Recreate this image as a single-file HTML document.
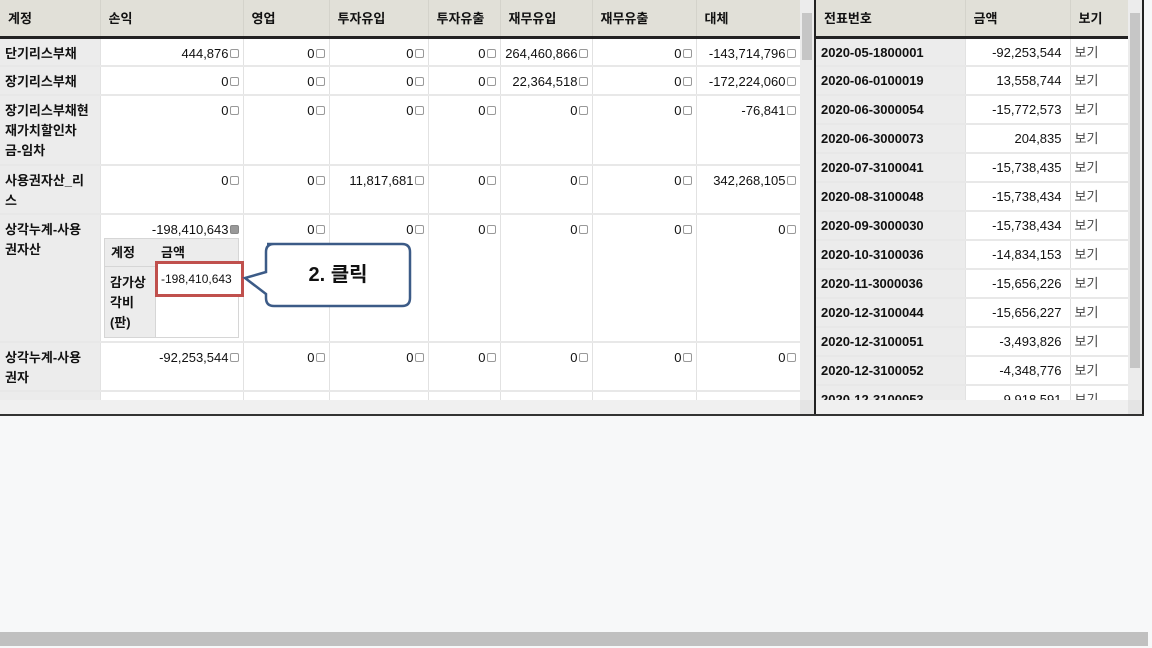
<!DOCTYPE html>
<html><head><meta charset="utf-8"><style>
*{margin:0;padding:0;box-sizing:border-box}
body{width:1152px;height:648px;overflow:hidden;background:#f7f8f9;font-family:"Liberation Sans","Noto Sans CJK KR",sans-serif;font-size:13px;color:#111;position:relative}
.wrap{position:absolute;left:0;top:0;width:1144px;height:416px;background:#fff;border-bottom:2px solid #333;overflow:hidden}
table{border-collapse:collapse;table-layout:fixed;position:absolute;top:0}
th{background:#e1e0d8;height:37px;text-align:left;font-weight:bold;padding:0 8px;border-right:1px solid #d4d3cb;border-bottom:3px solid #222;font-size:13px}
td{border-right:1px solid #e2e2e2;border-bottom:2px solid #e8e8e8;vertical-align:top;padding:6px 4px 0 4px;text-align:right;line-height:18px}
td.l{background:#ececec;text-align:left;font-weight:bold;padding-left:5px;line-height:20px;padding-top:5px}
.cb{display:inline-block;width:9px;height:9px;border:1px solid #999;border-radius:2px;margin-left:1px;vertical-align:0;background:#fff}
.cbk{background:#999;border-color:#888}
.vs{position:absolute;width:14px;background:#ececec}
.hs{position:absolute;height:14px;background:#f0f0f0}
.rt td{height:29px;padding-top:5px}
.rt td.id{background:#ececec;text-align:left;font-weight:bold;padding-left:5px}
.rt td.v{text-align:left;color:#444;padding-left:4px}
.rt td.n{padding-right:8px}
</style></head><body>
<div class="wrap">
<table style="left:0;width:800px">
<colgroup><col style="width:100px"><col style="width:143px"><col style="width:86px"><col style="width:99px"><col style="width:72px"><col style="width:92px"><col style="width:104px"><col style="width:104px"></colgroup>
<tr><th>계정</th><th>손익</th><th>영업</th><th>투자유입</th><th>투자유출</th><th>재무유입</th><th>재무유출</th><th>대체</th></tr>
<tr style="height:29px"><td class="l">단기리스부채</td><td>444,876<span class="cb"></span></td><td>0<span class="cb"></span></td><td>0<span class="cb"></span></td><td>0<span class="cb"></span></td><td>264,460,866<span class="cb"></span></td><td>0<span class="cb"></span></td><td>-143,714,796<span class="cb"></span></td></tr>
<tr style="height:29px"><td class="l">장기리스부채</td><td>0<span class="cb"></span></td><td>0<span class="cb"></span></td><td>0<span class="cb"></span></td><td>0<span class="cb"></span></td><td>22,364,518<span class="cb"></span></td><td>0<span class="cb"></span></td><td>-172,224,060<span class="cb"></span></td></tr>
<tr style="height:70px"><td class="l">장기리스부채현<br>재가치할인차<br>금-임차</td><td>0<span class="cb"></span></td><td>0<span class="cb"></span></td><td>0<span class="cb"></span></td><td>0<span class="cb"></span></td><td>0<span class="cb"></span></td><td>0<span class="cb"></span></td><td>-76,841<span class="cb"></span></td></tr>
<tr style="height:49px"><td class="l">사용권자산_리<br>스</td><td>0<span class="cb"></span></td><td>0<span class="cb"></span></td><td>11,817,681<span class="cb"></span></td><td>0<span class="cb"></span></td><td>0<span class="cb"></span></td><td>0<span class="cb"></span></td><td>342,268,105<span class="cb"></span></td></tr>
<tr style="height:128px"><td class="l">상각누계-사용<br>권자산</td><td>-198,410,643<span class="cb cbk"></span></td><td>0<span class="cb"></span></td><td>0<span class="cb"></span></td><td>0<span class="cb"></span></td><td>0<span class="cb"></span></td><td>0<span class="cb"></span></td><td>0<span class="cb"></span></td></tr>
<tr style="height:49px"><td class="l">상각누계-사용<br>권자</td><td>-92,253,544<span class="cb"></span></td><td>0<span class="cb"></span></td><td>0<span class="cb"></span></td><td>0<span class="cb"></span></td><td>0<span class="cb"></span></td><td>0<span class="cb"></span></td><td>0<span class="cb"></span></td></tr>
<tr style="height:40px"><td class="l"></td><td></td><td></td><td></td><td></td><td></td><td></td><td></td></tr>
</table>
<div style="position:absolute;left:104px;top:238px;width:135px;height:100px;border:1px solid #d6d6d6;background:#fff">
<div style="position:absolute;left:0;top:0;width:51px;height:98px;background:#ececec;border-right:1px solid #d6d6d6"></div>
<div style="position:absolute;left:0;top:0;width:133px;height:28px;background:#ececec;border-bottom:1px solid #d6d6d6"></div>
<div style="position:absolute;left:6px;top:3px;font-weight:bold">계정</div>
<div style="position:absolute;left:56px;top:3px;font-weight:bold">금액</div>
<div style="position:absolute;left:5px;top:34px;font-weight:bold;line-height:20px;width:40px">감가상<br>각비<br>(판)</div>
<div style="position:absolute;left:50px;top:22px;width:89px;height:36px;border:3px solid #c0504d;padding:8px 0 0 3px;font-size:12px;white-space:nowrap;background:#fff">-198,410,643</div>
</div>
<svg style="position:absolute;left:240px;top:240px" width="175" height="70">
<path d="M27 4 H162 Q170 4 170 12 V58 Q170 66 162 66 H34 Q26 66 26 58 V54 L5 38 L26 32 V12 Q26 4 34 4 Z" fill="#fff" stroke="#3c5b87" stroke-width="2.5"/>
<text x="98" y="41" text-anchor="middle" font-family="Liberation Sans,Noto Sans CJK KR,sans-serif" font-size="20" font-weight="bold" fill="#111">2. 클릭</text>
</svg>
<div class="vs" style="left:800px;top:0;height:400px"><div style="position:absolute;left:2px;top:13px;width:10px;height:47px;background:#c6c6c6"></div></div>
<div class="hs" style="left:0;top:400px;width:800px"></div>
<div style="position:absolute;left:800px;top:400px;width:14px;height:14px;background:#e4e4e4"></div>
<div style="position:absolute;left:814px;top:0;width:2px;height:416px;background:#222"></div>
<table class="rt" style="left:816px;width:312px">
<colgroup><col style="width:149px"><col style="width:105px"><col style="width:58px"></colgroup>
<tr><th>전표번호</th><th>금액</th><th>보기</th></tr>
<tr><td class="id">2020-05-1800001</td><td class="n">-92,253,544</td><td class="v">보기</td></tr>
<tr><td class="id">2020-06-0100019</td><td class="n">13,558,744</td><td class="v">보기</td></tr>
<tr><td class="id">2020-06-3000054</td><td class="n">-15,772,573</td><td class="v">보기</td></tr>
<tr><td class="id">2020-06-3000073</td><td class="n">204,835</td><td class="v">보기</td></tr>
<tr><td class="id">2020-07-3100041</td><td class="n">-15,738,435</td><td class="v">보기</td></tr>
<tr><td class="id">2020-08-3100048</td><td class="n">-15,738,434</td><td class="v">보기</td></tr>
<tr><td class="id">2020-09-3000030</td><td class="n">-15,738,434</td><td class="v">보기</td></tr>
<tr><td class="id">2020-10-3100036</td><td class="n">-14,834,153</td><td class="v">보기</td></tr>
<tr><td class="id">2020-11-3000036</td><td class="n">-15,656,226</td><td class="v">보기</td></tr>
<tr><td class="id">2020-12-3100044</td><td class="n">-15,656,227</td><td class="v">보기</td></tr>
<tr><td class="id">2020-12-3100051</td><td class="n">-3,493,826</td><td class="v">보기</td></tr>
<tr><td class="id">2020-12-3100052</td><td class="n">-4,348,776</td><td class="v">보기</td></tr>
<tr><td class="id">2020-12-3100053</td><td class="n">-9,918,591</td><td class="v">보기</td></tr>
</table>
<div class="vs" style="left:1128px;top:0;height:400px"><div style="position:absolute;left:2px;top:13px;width:10px;height:355px;background:#c6c6c6"></div></div>
<div class="hs" style="left:816px;top:400px;width:312px"></div>
<div style="position:absolute;left:1128px;top:400px;width:14px;height:14px;background:#e4e4e4"></div>
<div style="position:absolute;left:1142px;top:0;width:2px;height:416px;background:#222"></div>
</div>
<div style="position:absolute;left:0;top:632px;width:1148px;height:14px;background:#c0c0c0"></div>
</body></html>
